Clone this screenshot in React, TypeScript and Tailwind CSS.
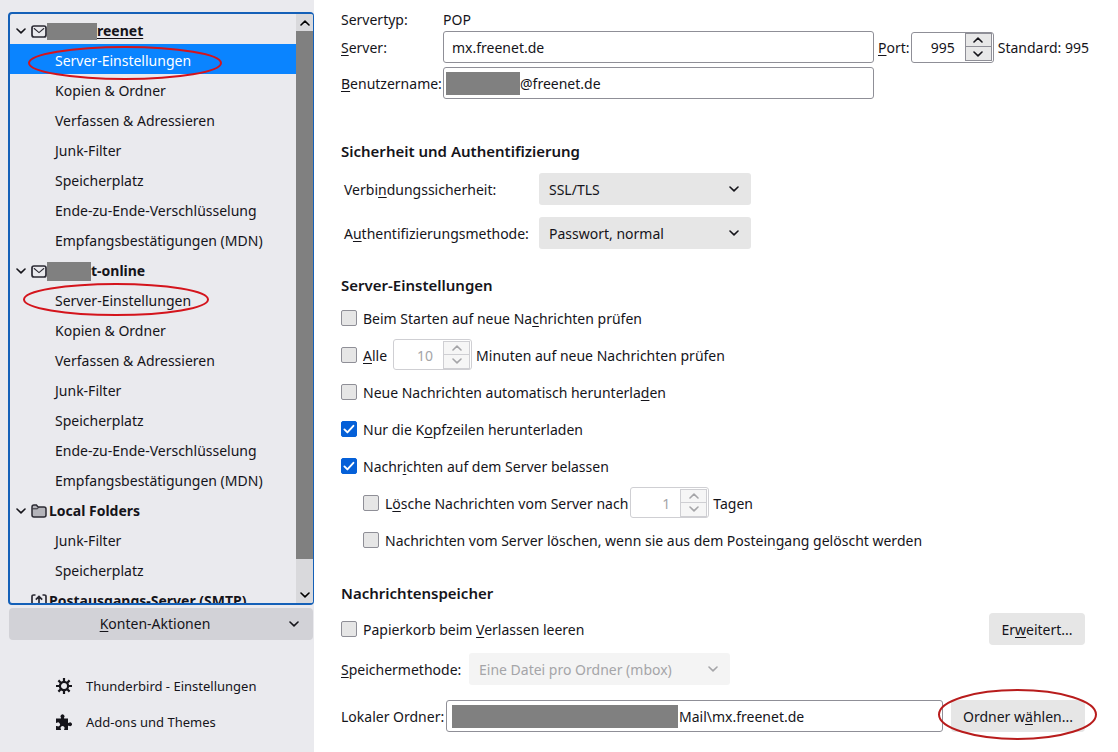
import React from "react";

/* Renders a caption whose access key is marked with a leading underscore. */
function Caption({ text }: { text: string }) {
  const at = text.indexOf("_");
  if (at < 0) return <>{text}</>;
  return (
    <>
      {text.slice(0, at)}
      <span className="underline decoration-1 underline-offset-2">{text[at + 1]}</span>
      {text.slice(at + 2)}
    </>
  );
}

function Chevron({ up = false, className = "" }: { up?: boolean; className?: string }) {
  return (
    <svg viewBox="0 0 10 6" aria-hidden="true" className={"h-1.5 w-2.5 shrink-0 " + className}>
      <path
        d={up ? "M1 5 5 1.2 9 5" : "M1 1 5 4.8 9 1"}
        fill="none"
        stroke="currentColor"
        strokeWidth="1.6"
        strokeLinecap="round"
        strokeLinejoin="round"
      />
    </svg>
  );
}

function MailIcon() {
  return (
    <svg viewBox="0 0 16 13" aria-hidden="true" className="h-[13px] w-4 shrink-0">
      <rect x="1" y="1" width="14" height="11" rx="2" fill="none" stroke="#2b2a33" strokeWidth="1.7" />
      <path d="M3.2 3.5 8 7.6l4.8-4.1" fill="none" stroke="#2b2a33" strokeWidth="1.1" strokeLinecap="round" />
    </svg>
  );
}

function FolderIcon() {
  return (
    <svg viewBox="0 0 16 14" aria-hidden="true" className="h-3.5 w-4 shrink-0">
      <path
        d="M1 3a2 2 0 0 1 2-2h2.4L7 3h6a2 2 0 0 1 2 2v6a2 2 0 0 1-2 2H3a2 2 0 0 1-2-2z"
        fill="#b4b4ba"
        stroke="#2b2a33"
        strokeWidth="1.5"
      />
      <path d="M1.5 4.8h5L8 3.2" fill="none" stroke="#2b2a33" strokeWidth="1" />
    </svg>
  );
}

function OutgoingIcon() {
  return (
    <svg viewBox="0 0 16 14" aria-hidden="true" className="h-3.5 w-4 shrink-0">
      <path
        d="M4.500 1H2.600A1.600 1.600 0 0 0 1 2.600V11.400A1.600 1.600 0 0 0 2.600 13h10.800a1.600 1.600 0 0 0 1.600-1.600V2.600A1.600 1.600 0 0 0 13.400 1H11.500M8 10V2.500M4.800 5.600 8 2.400l3.200 3.200"
        fill="none"
        stroke="#2b2a33"
        strokeWidth="1.7"
      />
    </svg>
  );
}

function GearIcon() {
  return (
    <svg viewBox="0 0 16 16" aria-hidden="true" className="size-4 shrink-0">
      <circle cx="8" cy="8" r="4.1" fill="none" stroke="#15141a" strokeWidth="2.2" />
      <path
        d="M8 0v3.500M8 12.500V16M0 8h3.500M12.500 8H16M2.400 2.400l2.300 2.300M11.300 11.300l2.300 2.300M2.400 13.600l2.300-2.300M11.300 4.700l2.300-2.300"
        stroke="#15141a"
        strokeWidth="2.200"
      />
    </svg>
  );
}

function PuzzleIcon() {
  return (
    <svg viewBox="0 0 16 16" aria-hidden="true" className="size-4 shrink-0">
      <path
        d="M0 4.500h4.600c.5 0 .6-.5.3-.9a2 2 0 1 1 3.200 0c-.3.4-.2.9.3.9H12v4c0 .5.500.6.900.3a1.900 1.900 0 1 1 0 3c-.4-.3-.9-.2-.9.300V16H8.500c-.5 0-.6-.5-.3-.9a2 2 0 1 0-3.300 0c.3.400.2.900-.3.900H0v-3.600c0-.5.500-.6.900-.3a2 2 0 1 0 0-3.300c-.4.300-.9.200-.9-.3z"
        fill="#15141a"
      />
    </svg>
  );
}

function Marker({ className }: { className: string }) {
  return (
    <svg
      viewBox="0 0 100 100"
      preserveAspectRatio="none"
      aria-hidden="true"
      className={"pointer-events-none absolute z-10 overflow-visible " + className}
    >
      <ellipse
        cx="50"
        cy="50"
        rx="50"
        ry="50"
        fill="none"
        stroke="currentColor"
        strokeWidth="2"
        vectorEffect="non-scaling-stroke"
      />
    </svg>
  );
}

function Account({
  icon,
  name,
  hidden,
  current,
  children,
}: {
  icon: React.ReactNode;
  name: string;
  hidden?: React.ReactNode;
  current?: boolean;
  children?: React.ReactNode;
}) {
  return (
    <li>
      <a href="#account" className="flex h-[30px] items-center pl-1.5 pt-1 font-bold">
        <span className="flex w-[15px] shrink-0">{children ? <Chevron /> : null}</span>
        {icon}
        {hidden}
        <span className={(current ? "underline underline-offset-2 " : "") + (hidden ? "" : "pl-0.5")}>{name}</span>
      </a>
      {children ? <ul>{children}</ul> : null}
    </li>
  );
}

function Page({ name, selected, marker }: { name: string; selected?: boolean; marker?: React.ReactNode }) {
  return (
    <li className="relative">
      <a
        href="#page"
        className={"flex h-[30px] items-center pl-[45px] pt-1 " + (selected ? "bg-[#0a84ff] text-white" : "")}
      >
        {name}
      </a>
      {marker}
    </li>
  );
}

const mailPages = [
  "Kopien & Ordner",
  "Verfassen & Adressieren",
  "Junk-Filter",
  "Speicherplatz",
  "Ende-zu-Ende-Verschlüsselung",
  "Empfangsbestätigungen (MDN)",
];

function Sidebar() {
  return (
    <aside className="sticky top-0 flex h-screen w-[314px] shrink-0 flex-col bg-[#eaeaee] pb-3 pl-2 pt-3">
      <nav
        aria-label="Konten"
        className="flex min-h-0 flex-1 overflow-hidden rounded border-2 border-r border-[#1460b8]"
      >
        <ul className="min-w-0 flex-1 overflow-hidden">
          <Account icon={<MailIcon />} name="reenet" current hidden={<span className="h-[17px] w-[50px] bg-[#808080]" />}>
            <Page
              name="Server-Einstellungen"
              selected
              marker={<Marker className="left-[19px] top-[3px] h-8 w-[192px] text-[#d4141c]" />}
            />
            {mailPages.map((p) => (
              <Page key={p} name={p} />
            ))}
          </Account>
          <Account icon={<MailIcon />} name="t-online" hidden={<span className="h-[19px] w-[44px] bg-[#808080]" />}>
            <Page
              name="Server-Einstellungen"
              marker={<Marker className="left-3.5 top-0 h-[31px] w-[184px] text-[#d4141c]" />}
            />
            {mailPages.map((p) => (
              <Page key={p} name={p} />
            ))}
          </Account>
          <Account icon={<FolderIcon />} name="Local Folders">
            <Page name="Junk-Filter" />
            <Page name="Speicherplatz" />
          </Account>
          <Account icon={<OutgoingIcon />} name="Postausgangs-Server (SMTP)" />
        </ul>
        <div className="flex w-[17px] shrink-0 flex-col bg-[#d9d9dc]" aria-hidden="true">
          <span className="flex h-[17px] items-center justify-center text-black">
            <Chevron up />
          </span>
          <span className="flex-[528] bg-[#808080]" />
          <span className="flex-[27]" />
          <span className="flex h-[17px] items-center justify-center text-black">
            <Chevron />
          </span>
        </div>
      </nav>
      <button
        type="button"
        className="ml-px mr-px mt-[3px] flex h-8 shrink-0 items-center rounded-sm bg-[#d2d2d7] pl-3 pr-3.5"
      >
        <span className="flex-1 text-center">
          <Caption text="_Konten-Aktionen" />
        </span>
        <Chevron />
      </button>
      <ul className="mt-7 shrink-0 pl-12 text-[13px]">
        <li>
          <a href="#settings" className="flex h-9 items-center gap-3.5">
            <GearIcon />
            Thunderbird - Einstellungen
          </a>
        </li>
        <li>
          <a href="#addons" className="flex h-9 items-center gap-3.5">
            <PuzzleIcon />
            Add-ons und Themes
          </a>
        </li>
      </ul>
    </aside>
  );
}

const fieldBox = "flex h-8 min-w-0 items-center rounded-[3px] border border-[#8f8f97] bg-white";

function Spinner({ id, label, value, disabled }: { id: string; label: string; value: string; disabled?: boolean }) {
  const line = disabled ? "border-[#cfcfd3]" : "border-[#8f8f97]";
  const step = "flex h-[13px] items-center justify-center disabled:bg-[#f6f6f6] bg-[#e8e8e8]";
  return (
    <span
      className={
        "flex h-[31px] shrink-0 items-center rounded-[3px] border bg-white pr-px " +
        line +
        (disabled ? " w-[79px] text-[#a5a5a8]" : " w-[83px]")
      }
    >
      <input
        id={id}
        aria-label={label}
        inputMode="numeric"
        defaultValue={value}
        disabled={disabled}
        className="w-0 min-w-0 flex-1 bg-transparent pr-2.5 pt-0.5 text-right outline-none"
      />
      <span className={"flex w-[27px] shrink-0 flex-col border " + line}>
        <button type="button" aria-label={label + " erhöhen"} disabled={disabled} className={step + " border-b " + line}>
          <Chevron up />
        </button>
        <button type="button" aria-label={label + " verringern"} disabled={disabled} className={step}>
          <Chevron />
        </button>
      </span>
    </span>
  );
}

function Check({ id, text, checked }: { id: string; text: string; checked?: boolean }) {
  return (
    <>
      <span className="relative flex shrink-0">
        <input
          id={id}
          type="checkbox"
          defaultChecked={checked}
          className="peer size-4 appearance-none rounded-[2px] border border-[#8f8f97] bg-[#e6e6e6] checked:border-[#0560d8] checked:bg-[#0560d8]"
        />
        <svg
          viewBox="0 0 16 16"
          aria-hidden="true"
          className="pointer-events-none absolute inset-0 hidden size-4 peer-checked:block"
        >
          <path
            d="m3.400 8.400 3 3 6-6.600"
            fill="none"
            stroke="#fff"
            strokeWidth="1.900"
            strokeLinecap="round"
            strokeLinejoin="round"
          />
        </svg>
      </span>
      <label htmlFor={id} className="ml-1.5 whitespace-nowrap pt-0.5">
        <Caption text={text} />
      </label>
    </>
  );
}

function Select({ id, value, disabled, className }: { id: string; value: string; disabled?: boolean; className: string }) {
  return (
    <span className={"relative flex h-8 items-center " + className + (disabled ? " text-[#a5a5a8]" : "")}>
      <select
        id={id}
        disabled={disabled}
        className="h-8 w-full appearance-none rounded-[3px] bg-[#e6e6e6] pl-2.5 pr-8 pt-0.5 disabled:bg-[#f4f4f4] disabled:opacity-100"
      >
        <option>{value}</option>
      </select>
      <Chevron className="pointer-events-none absolute right-3" />
    </span>
  );
}

function Heading({ children, className }: { children: React.ReactNode; className: string }) {
  return <h2 className={"text-[15px] font-semibold leading-6 " + className}>{children}</h2>;
}

const checkRow = "flex h-[37px] items-center";

export default function App() {
  return (
    <div className="flex min-h-screen bg-white font-['Noto_Sans','Open_Sans',sans-serif] text-sm leading-5 text-[#15141a]">
      <Sidebar />
      <main className="min-w-0 flex-1 pb-5 pl-[27px] pr-[29px] pt-2.5">
        <div className="grid grid-cols-[102px_minmax(0,1fr)_215px] items-center gap-y-1">
          <span className="-mb-[3px]">Servertyp:</span>
          <span className="col-span-2 -mb-[3px]">POP</span>
          <label htmlFor="server" className="pt-0.5">
            <Caption text="_Server:" />
          </label>
          <span className={fieldBox}>
            <input
              id="server"
              defaultValue="mx.freenet.de"
              className="min-w-0 flex-1 bg-transparent px-2 pt-0.5 outline-none"
            />
          </span>
          <span className="flex items-center whitespace-nowrap pl-1">
            <label htmlFor="port" className="w-[33px] pt-0.5">
              <Caption text="_Port:" />
            </label>
            <Spinner id="port" label="Port" value="995" />
            <span className="ml-1 pt-0.5">Standard: 995</span>
          </span>
          <label htmlFor="user" className="pt-0.5">
            <Caption text="_Benutzername:" />
          </label>
          <span className={fieldBox}>
            <span className="ml-0.5 h-[23px] w-[74px] shrink-0 bg-[#808080]" />
            <input id="user" defaultValue="@freenet.de" className="min-w-0 flex-1 bg-transparent pt-0.5 outline-none" />
          </span>
        </div>

        <section>
          <Heading className="mt-10">Sicherheit und Authentifizierung</Heading>
          <div className="mt-2.5 grid grid-cols-[195px_212px] gap-y-3 pl-[3px]">
            <label htmlFor="security" className="self-center pt-0.5">
              <Caption text="Verbi_ndungssicherheit:" />
            </label>
            <Select id="security" value="SSL/TLS" className="w-full" />
            <label htmlFor="auth" className="self-center pt-0.5">
              <Caption text="A_uthentifizierungsmethode:" />
            </label>
            <Select id="auth" value="Passwort, normal" className="w-full" />
          </div>
        </section>

        <section>
          <Heading className="mt-6">Server-Einstellungen</Heading>
          <div className="mt-0.5">
            <div className={checkRow}>
              <Check id="on-start" text="Beim Starten auf neue Na_chrichten prüfen" />
            </div>
            <div className={checkRow}>
              <Check id="every" text="_Alle" />
              <span className="ml-1.5 flex">
                <Spinner id="minutes" label="Minuten" value="10" disabled />
              </span>
              <label htmlFor="minutes" className="ml-1 pt-0.5">
                Minuten auf neue Nachrichten prüfen
              </label>
            </div>
            <div className={checkRow}>
              <Check id="auto" text="Neue Nachrichten automatisch herunterla_den" />
            </div>
            <div className={checkRow}>
              <Check id="headers" text="Nur die K_opfzeilen herunterladen" checked />
            </div>
            <div className={checkRow}>
              <Check id="leave" text="Nachr_ichten auf dem Server belassen" checked />
            </div>
            <div className={checkRow + " pl-[22px]"}>
              <Check id="delete-after" text="L_ösche Nachrichten vom Server nach" />
              <span className="ml-0.5 flex">
                <Spinner id="days" label="Tage" value="1" disabled />
              </span>
              <label htmlFor="days" className="ml-1 pt-0.5">
                Tagen
              </label>
            </div>
            <div className={checkRow + " pl-[22px]"}>
              <Check id="delete-moved" text="Nachrichten vom Server löschen, wenn sie aus dem Postein_gang gelöscht werden" />
            </div>
          </div>
        </section>

        <section className="pr-1">
          <Heading className="mt-[23px]">Nachrichtenspeicher</Heading>
          <div className="mt-2 flex h-8 items-center">
            <Check id="trash" text="Papierkorb beim _Verlassen leeren" />
            <button type="button" className="ml-auto h-8 w-24 rounded bg-[#e6e6e6] pt-0.5">
              <Caption text="Er_weitert..." />
            </button>
          </div>
          <div className="mt-2 flex h-8 items-center">
            <label htmlFor="method" className="w-32 pt-0.5">
              <Caption text="_Speichermethode:" />
            </label>
            <Select id="method" value="Eine Datei pro Ordner (mbox)" disabled className="w-[261px]" />
          </div>
          <div className="mt-[15px] flex h-8 items-center">
            <label htmlFor="folder" className="w-[105px] shrink-0 whitespace-nowrap pt-0.5">
              Lokaler Ordner:
            </label>
            <span className={fieldBox + " flex-1"}>
              <span className="ml-[5px] h-[23px] w-[226px] shrink-0 bg-[#808080]" />
              <input
                id="folder"
                readOnly
                defaultValue="Mail\mx.freenet.de"
                className="min-w-0 flex-1 bg-transparent pl-px pt-0.5 outline-none"
              />
            </span>
            <span className="relative ml-2 flex">
              <button type="button" className="h-8 w-[134px] rounded bg-[#e6e6e6] pt-0.5">
                <Caption text="Ordner w_ählen..." />
              </button>
              <Marker className="-left-3 -top-2.5 h-[49px] w-[157px] text-[#b81c1c]" />
            </span>
          </div>
        </section>
      </main>
    </div>
  );
}
